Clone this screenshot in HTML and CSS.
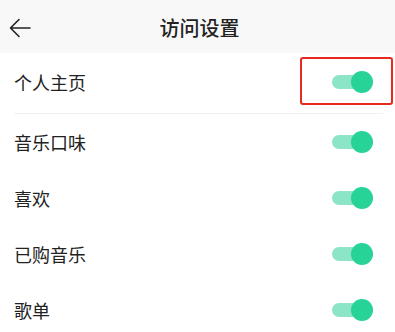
FILE: index.html
```html
<!DOCTYPE html>
<html lang="zh-CN">

<head>
    <meta charset="UTF-8">
    <meta name="viewport" content="width=device-width, initial-scale=1.0">
    <title>访问设置</title>
    <link rel="stylesheet" href="styles.css">
</head>

<body>
    <div class="top-bar">
        <svg class="back" width="24" height="22" viewBox="0 0 24 22">
            <path d="M22 11H2.5M11 2.5L2.5 11L11 19.5" fill="none" stroke="#222" stroke-width="1.6" stroke-linecap="round" stroke-linejoin="round"/>
        </svg>
        <h1>访问设置</h1>
    </div>

    <ul class="settings first">
        <li>
            <span>个人主页</span>
            <span class="switch on"></span>
            <span class="mark"></span>
        </li>
    </ul>

    <ul class="settings">
        <li><span>音乐口味</span><span class="switch on"></span></li>
        <li><span>喜欢</span><span class="switch on"></span></li>
        <li><span>已购音乐</span><span class="switch on"></span></li>
        <li><span>歌单</span><span class="switch on"></span></li>
    </ul>
</body>

</html>
```

FILE: styles.css
```css
body {
    margin: 0;
    background-color: #fff;
    font-family: "Noto Sans CJK SC", "Noto Sans", sans-serif;
    color: #222;
    overflow: hidden;
}

.top-bar {
    height: 53px;
    background-color: #f8f8f8;
    display: flex;
    align-items: center;
    justify-content: center;
    position: relative;
}

.top-bar .back {
    position: absolute;
    left: 8px;
    top: 17px;
}

.top-bar h1 {
    margin: 0 0 0 4px;
    font-size: 20px;
    font-weight: 500;
    line-height: 24px;
    color: #222;
    padding-top: 2px;
}

ul.settings {
    list-style-type: none;
    margin: 0;
    padding: 0 22px 0 14px;
}

ul.settings.first {
    margin: 0 12px 0 14px;
    padding: 0 10px 3px 0;
    border-bottom: 1px solid #f1f1f1;
}

ul.settings li {
    height: 56px;
    display: flex;
    align-items: center;
    justify-content: space-between;
    font-size: 18px;
    position: relative;
}

ul.settings.first li {
    height: 57px;
}

/* toggle switch */
.switch {
    width: 41px;
    height: 22px;
    position: relative;
}

.switch::before {
    content: "";
    position: absolute;
    left: 0;
    top: 4px;
    width: 36px;
    height: 14px;
    border-radius: 7px;
    background-color: #8de5c7;
}

.switch::after {
    content: "";
    position: absolute;
    right: 0;
    top: 0;
    width: 22px;
    height: 22px;
    border-radius: 50%;
    background-color: #27d396;
}

/* red annotation box */
.mark {
    position: absolute;
    right: -20px;
    top: 4px;
    width: 89px;
    height: 44px;
    border: 2.5px solid #e62a1f;
    border-radius: 3px;
}
```
